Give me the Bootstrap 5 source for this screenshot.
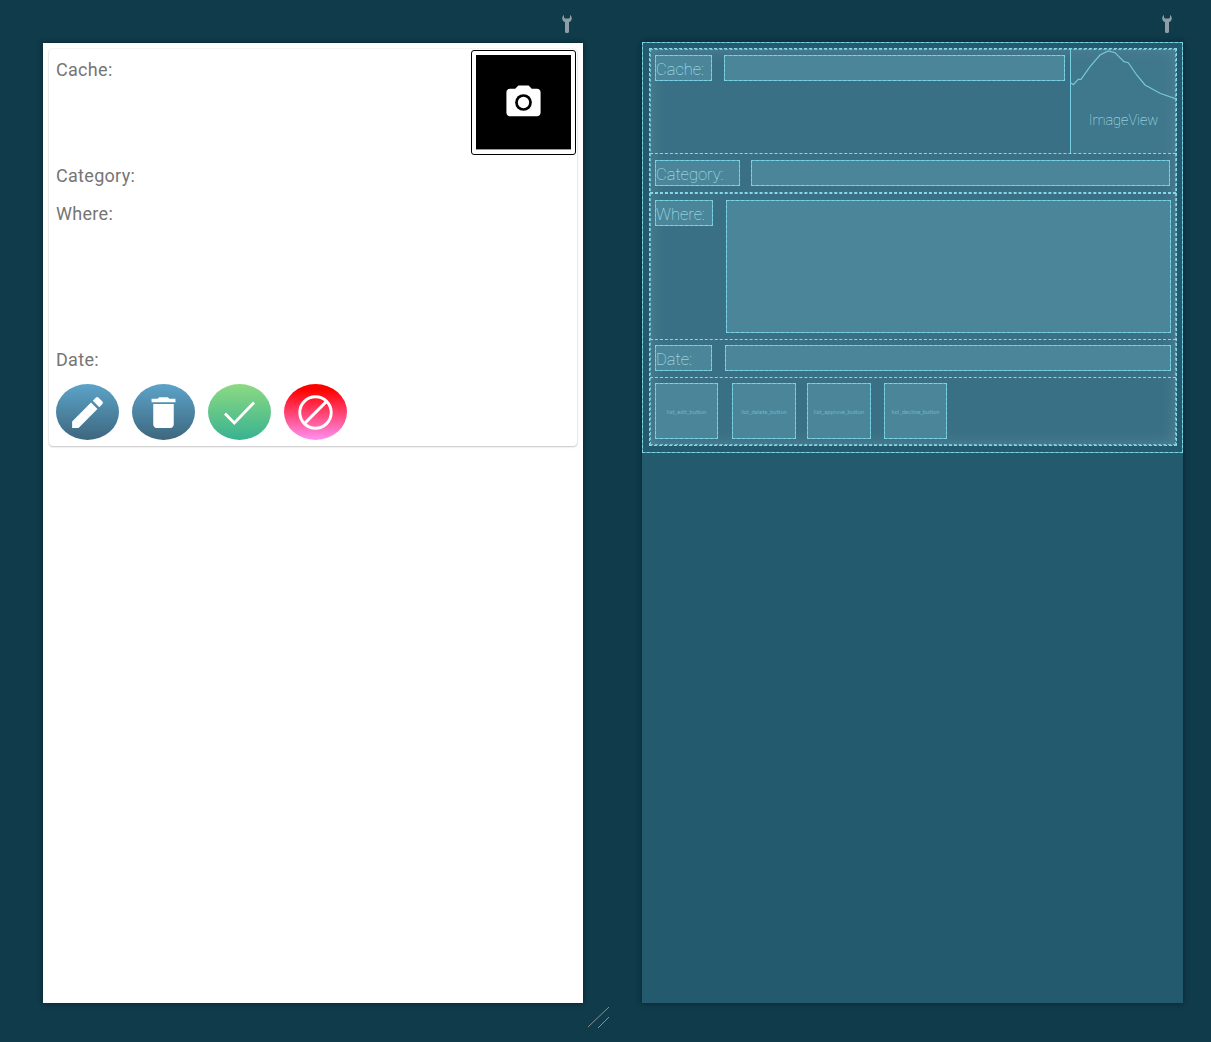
<!DOCTYPE html>
<html lang="en">
<head>
    <meta charset="UTF-8">
    <meta name="viewport" content="width=device-width, initial-scale=1.0">
    <title>Layout Editor</title>
    <link href="https://cdn.jsdelivr.net/npm/bootstrap@5.3.3/dist/css/bootstrap.min.css" rel="stylesheet">
    <script src="https://cdn.jsdelivr.net/npm/bootstrap@5.3.3/dist/js/bootstrap.bundle.min.js"></script>
    <style>
        html, body { height: 1042px; overflow: hidden; }
        body { background: #0f3b4b; font-family: Roboto, "Liberation Sans", sans-serif; position: relative; }
        .canvas { padding-left: 43px; gap: 59px; }
        .tool-col { width: 540px; }
        .tool-col.second { width: 541px; }
        .tool-bar { height: 43px; padding: 15px 11px 0 0; }
        .tool-bar.second { height: 42px; padding-right: 11px; }
        .wrench { width: 10px; height: 18px; fill: #8f9ea4; }

        /* design view */
        .screen-light { height: 960px; background: #fff; padding: 6px; box-shadow: 0 0 6px rgba(0,0,0,.45); }
        .item-card { width: 528px; height: 397px; border: 0; border-radius: 4px; box-shadow: 0 0 2px rgba(0,0,0,.14), 0 1px 2px rgba(0,0,0,.2); }
        .field-label { color: #757575; font-size: 18px; letter-spacing: .3px; line-height: 21px; padding-left: 7px; }
        .row-cache { height: 105px; padding-top: 10px; }
        .row-category { height: 39px; padding-top: 11px; }
        .row-where { height: 146px; padding-top: 10px; }
        .row-date { height: 38px; padding-top: 10px; }
        .photo-box { width: 105px; height: 105px; margin: -9px 1px 0 0; border: 1px solid #000; border-radius: 3px; padding: 4px; background: #fff; }
        .photo-inner { background: #000; border-bottom: 1px solid #999; height: 95px; }
        .photo-inner svg { width: 41px; height: 41px; fill: #fff; }
        .row-actions { padding: 7px 0 0 7px; gap: 13px; }
        .round-btn { width: 63px; height: 56px; padding: 0; border: 0; }
        .round-btn svg { width: 41px; height: 41px; fill: #fff; }
        .round-btn svg .thin { fill: none; stroke: #fff; stroke-width: 1.7; }
        .grad-blue { background: linear-gradient(#5ca3c9, #3d677e); }
        .grad-green { background: linear-gradient(#8cda82, #38b291); }
        .grad-red { background: linear-gradient(#ff0000 10%, #ff90f4); }

        /* blueprint view */
        .screen-blue { height: 961px; background: #245a6e; box-shadow: 0 0 6px rgba(0,0,0,.4); }
        .bp-select { height: 411px; border: 1px dashed #86d8e8; outline: 1px solid rgba(120,210,230,.65); outline-offset: -1px; padding: 5px 5px 6px 6px; }
        .bp-card { height: 398px; background: #3a7085; border: 1px dashed #86d8e8; outline: 1px dashed rgba(134,216,232,.75); outline-offset: -2px; box-shadow: inset 0 0 16px rgba(190,225,235,.2); }
        .bp-row { border-bottom: 1px dashed #86d8e8; padding: 6px 5px; }
        .bp-row:last-child { border-bottom: 0; }
        .bp-r1 { height: 105px; padding: 0 0 0 5px; }
        .bp-r2 { height: 39px; }
        .bp-r3 { height: 147px; border-top: 1px dashed #86d8e8; padding-top: 6px; }
        .bp-r4 { height: 38px; padding-top: 5px; }
        .bp-box { height: 26px; background: #4a859a; border: 1px dashed #86d8e8; outline: 1px solid rgba(120,210,230,.7); outline-offset: -1px; color: #b4ecf6; font-weight: 100; font-size: 16.5px; line-height: 28px; white-space: nowrap; overflow: hidden; flex: none; }
        .gap-l { margin-right: 12px; }
        .gap-d { margin-right: 13px; }
        .w-cache { width: 57px; margin-top: 6px; }
        .w-cachef { width: 341px; margin-top: 6px; }
        .w-cat { width: 85px; margin-right: 11px; }
        .w-catf { width: 419px; }
        .w-where { width: 58px; margin-right: 13px; }
        .w-wheref { width: 445px; height: 133px; }
        .w-date { width: 57px; }
        .w-datef { width: 446px; }
        .bp-image { width: 106px; margin-left: auto; border-left: 1px solid #76cfe2; background: rgba(74,133,154,.35); }
        .bp-image svg { width: 105px; height: 60px; fill: none; stroke: #79c6d8; stroke-width: 1.2; }
        .bp-image-name { color: #b4ecf6; font-size: 14.5px; font-weight: 100; padding-top: 1px; }
        .bp-btns { padding: 5px 0 0 5px; }
        .bp-btn { height: 56px; background: #4a859a; border: 1px dashed #86d8e8; outline: 1px solid rgba(120,210,230,.7); outline-offset: -1px; color: #70b5c6; font-size: 5.8px; flex: none; padding-top: 3px; }
        .b1 { width: 63px; margin-right: 14px; }
        .b2 { width: 64px; margin-right: 11px; }
        .b3 { width: 64px; margin-right: 13px; padding-top: 2px; }
        .b4 { width: 63px; padding-top: 2px; }

        .resize-mark { position: absolute; left: 587px; top: 1006px; width: 23px; height: 23px; stroke: #8a8f90; stroke-width: 1; }
    </style>
</head>
<body>
    <div class="canvas d-flex">
        <div class="tool-col">
            <div class="tool-bar d-flex justify-content-end">
                <svg class="wrench" viewBox="0 0 10 18"><path d="M2 0C.2 1-.4 4 1 5.700 1.600 6.400 2.400 6.900 3 7.100v9.400c0 1 .9 1.500 2 1.500s2-.5 2-1.500V7.100c.6-.2 1.400-.7 2-1.400C10.400 4 9.800 1 8 0v2.600L7 3.600H3L2 2.600z"/></svg>
            </div>
            <div class="screen-light">
                <div class="card item-card">
                    <div class="d-flex justify-content-between row-cache">
                        <div class="field-label">Cache:</div>
                        <div class="photo-box">
                            <div class="photo-inner d-flex align-items-center justify-content-center">
                                <svg viewBox="0 0 24 24"><path d="M9 2L7.17 4H4c-1.1 0-2 .9-2 2v12c0 1.1.9 2 2 2h16c1.1 0 2-.9 2-2V6c0-1.1-.9-2-2-2h-3.17L15 2H9z"/><circle cx="12" cy="12" r="4.9" fill="#000"/><circle cx="12" cy="12" r="3.3"/></svg>
                            </div>
                        </div>
                    </div>
                    <div class="field-label row-category">Category:</div>
                    <div class="field-label row-where">Where:</div>
                    <div class="field-label row-date">Date:</div>
                    <div class="d-flex row-actions">
                        <button class="btn round-btn rounded-circle grad-blue d-flex align-items-center justify-content-center" aria-label="Edit"><svg viewBox="0 0 24 24"><path d="M3 17.25V21h3.75L17.81 9.94l-3.75-3.75L3 17.25zM20.71 7.04c.39-.39.39-1.02 0-1.41l-2.34-2.34c-.39-.39-1.02-.39-1.41 0l-1.83 1.83 3.75 3.75 1.83-1.83z"/></svg></button>
                        <button class="btn round-btn rounded-circle grad-blue d-flex align-items-center justify-content-center" aria-label="Delete"><svg viewBox="0 0 24 24"><path d="M6 19c0 1.1.9 2 2 2h8c1.1 0 2-.9 2-2V7H6v12zM19 4h-3.5l-1-1h-5l-1 1H5v2h14V4z"/></svg></button>
                        <button class="btn round-btn rounded-circle grad-green d-flex align-items-center justify-content-center" aria-label="Approve"><svg viewBox="0 0 24 24"><polyline class="thin" points="3.500,12.600 8.960,18.100 20.500,6.200"/></svg></button>
                        <button class="btn round-btn rounded-circle grad-red d-flex align-items-center justify-content-center" aria-label="Decline"><svg viewBox="0 0 24 24"><circle class="thin" cx="12" cy="12" r="9.200"/><line class="thin" x1="5.500" y1="18.500" x2="18.500" y2="5.500"/></svg></button>
                    </div>
                </div>
            </div>
        </div>

        <div class="tool-col second">
            <div class="tool-bar second d-flex justify-content-end">
                <svg class="wrench" viewBox="0 0 10 18"><path d="M2 0C.2 1-.4 4 1 5.700 1.600 6.400 2.400 6.900 3 7.100v9.400c0 1 .9 1.500 2 1.500s2-.5 2-1.500V7.100c.6-.2 1.400-.7 2-1.400C10.400 4 9.800 1 8 0v2.600L7 3.600H3L2 2.600z"/></svg>
            </div>
            <div class="screen-blue">
                <div class="bp-select">
                    <div class="bp-card">
                        <div class="bp-row bp-r1 d-flex">
                            <div class="bp-box w-cache gap-l">Cache:</div>
                            <div class="bp-box w-cachef"></div>
                            <div class="bp-image text-center">
                                <svg viewBox="0 0 105 60"><polyline points="0,34 2.3,35.7 7.3,30.3 10,30.3 19,17.7 29,6 37.3,2 44,3.7 53,12.7 57.3,13.7 65.7,26 74,36 89,44.3 105,50"/></svg>
                                <div class="bp-image-name">ImageView</div>
                            </div>
                        </div>
                        <div class="bp-row bp-r2 d-flex">
                            <div class="bp-box w-cat">Category:</div>
                            <div class="bp-box w-catf"></div>
                        </div>
                        <div class="bp-row bp-r3 d-flex">
                            <div class="bp-box w-where">Where:</div>
                            <div class="bp-box w-wheref"></div>
                        </div>
                        <div class="bp-row bp-r4 d-flex">
                            <div class="bp-box w-date gap-d">Date:</div>
                            <div class="bp-box w-datef"></div>
                        </div>
                        <div class="bp-btns d-flex">
                            <div class="bp-btn b1 d-flex align-items-center justify-content-center">list_edit_button</div>
                            <div class="bp-btn b2 d-flex align-items-center justify-content-center">list_delete_button</div>
                            <div class="bp-btn b3 d-flex align-items-center justify-content-center">list_approve_button</div>
                            <div class="bp-btn b4 d-flex align-items-center justify-content-center">list_decline_button</div>
                        </div>
                    </div>
                </div>
            </div>
        </div>
    </div>
    <svg class="resize-mark" viewBox="0 0 23 23"><line x1="1" y1="21" x2="22" y2="1"/><line x1="11" y1="22" x2="22" y2="11"/></svg>
</body>
</html>
